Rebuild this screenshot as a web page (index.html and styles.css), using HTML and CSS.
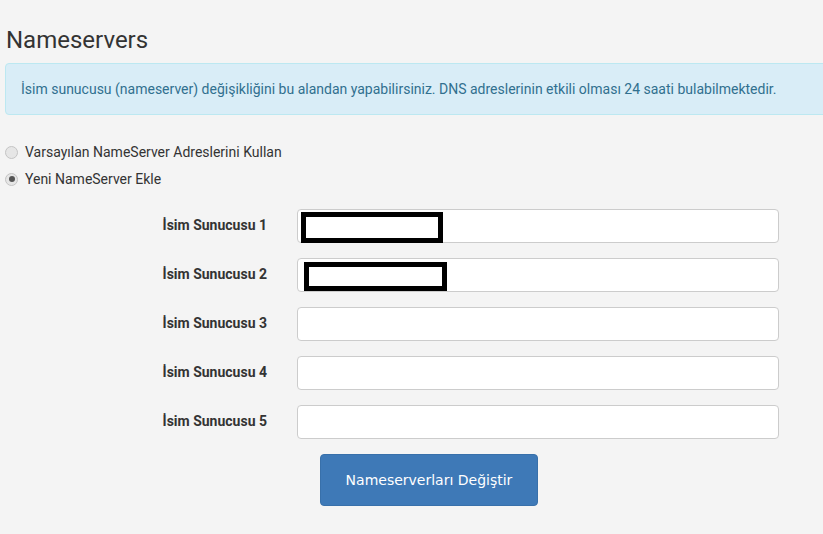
FILE: index.html
```html
<!DOCTYPE html>
<html lang="tr">
<head>
<meta charset="utf-8">
<link rel="stylesheet" href="styles.css">
</head>
<body>
<div class="page">
  <h1 class="title">Nameservers</h1>
  <div class="alert">İsim sunucusu (nameserver) değişikliğini bu alandan yapabilirsiniz. DNS adreslerinin etkili olması 24 saati bulabilmektedir.</div>
  <div class="radios">
    <label class="radio"><input type="radio" name="ns"> Varsayılan NameServer Adreslerini Kullan</label>
    <label class="radio"><input type="radio" name="ns" checked> Yeni NameServer Ekle</label>
  </div>
  <div class="form">
    <label class="lbl">İsim Sunucusu 1</label>
    <div class="field"><span class="redact r1"></span></div>
    <label class="lbl">İsim Sunucusu 2</label>
    <div class="field"><span class="redact r2"></span></div>
    <label class="lbl">İsim Sunucusu 3</label>
    <div class="field"></div>
    <label class="lbl">İsim Sunucusu 4</label>
    <div class="field"></div>
    <label class="lbl">İsim Sunucusu 5</label>
    <div class="field"></div>
  </div>
  <div class="actions">
    <button class="btn">Nameserverları Değiştir</button>
  </div>
</div>
</body>
</html>
```
FILE: styles.css
```css
html, body {
  margin: 0;
  padding: 0;
  background: #f4f4f4;
  overflow: hidden;
}
body {
  font-family: Roboto, "Noto Sans", sans-serif;
  color: #333;
  width: 823px;
  height: 534px;
}
.page {
  padding: 0 0 0 5px;
}
.title {
  margin: 0;
  padding-top: 27px;
  font-size: 24px;
  font-weight: 400;
  line-height: 27px;
  color: #333;
  padding-left: 1px;
}
.alert {
  margin-top: 9px;
  width: 830px;
  box-sizing: border-box;
  height: 52px;
  background: #d9edf7;
  border: 1px solid #bce8f1;
  border-radius: 4px;
  color: #31708f;
  font-size: 14px;
  line-height: 50px;
  padding-left: 15px;
  white-space: nowrap;
}
.radios {
  margin-top: 27px;
  display: flex;
  flex-direction: column;
  gap: 7px;
}
.radio {
  display: flex;
  align-items: center;
  font-size: 14px;
  line-height: 20px;
  color: #333;
}
.radio input {
  appearance: none;
  -webkit-appearance: none;
  margin: 0 7px 0 0;
  width: 13px;
  height: 13px;
  box-sizing: border-box;
  border-radius: 50%;
  border: 1px solid #c4c4c4;
  background: #e6e6e6;
  display: inline-flex;
  align-items: center;
  justify-content: center;
}
.radio input:checked::after {
  content: "";
  width: 6px;
  height: 6px;
  border-radius: 50%;
  background: #555;
}
.form {
  margin-top: 20px;
  display: grid;
  grid-template-columns: 262px 482px;
  column-gap: 30px;
  row-gap: 15px;
  align-items: center;
}
.lbl {
  text-align: right;
  font-weight: 700;
  font-size: 14px;
  color: #333;
  margin-top: -2px;
}
.field {
  height: 34px;
  box-sizing: border-box;
  background: #fff;
  border: 1px solid #ccc;
  border-radius: 4px;
  display: flex;
  align-items: flex-start;
}
.redact {
  display: block;
  box-sizing: border-box;
  border: 5px solid #000;
  background: #fff;
}
.r1 {
  width: 142px;
  height: 31px;
  margin: 2px 0 0 3px;
}
.r2 {
  width: 143px;
  height: 29px;
  margin: 3px 0 0 6px;
}
.actions {
  margin-top: 15px;
  padding-left: 315px;
}
.btn {
  width: 218px;
  height: 52px;
  background: #3e79b7;
  border: 1px solid #3870aa;
  border-radius: 4px;
  color: #fff;
  font-family: "DejaVu Sans", Verdana, sans-serif;
  font-size: 14px;
  padding: 0;
}
```
